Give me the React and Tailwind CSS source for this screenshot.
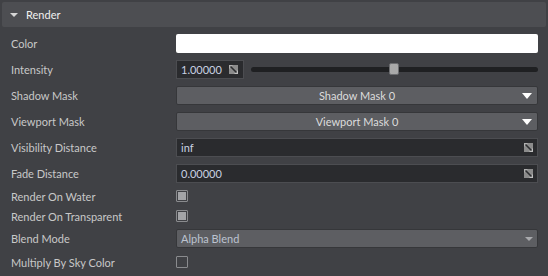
import React from "react";

const font = { fontFamily: 'Lato, "Liberation Sans", Arial, sans-serif' };

function ResizeIcon() {
  return (
    <svg width="9" height="9" viewBox="0 0 9 9" className="shrink-0">
      <rect x="0" y="0" width="9" height="9" fill="#8c8c8c" />
      <polygon points="0,0 4,0 0,4" fill="#b0b0b0" />
      <polygon points="9,9 5,9 9,5" fill="#c0c0c0" />
      <line x1="1.5" y1="1.5" x2="7.5" y2="7.5" stroke="#2c2d30" strokeWidth="1.6" />
    </svg>
  );
}

function Arrow({ dim }) {
  return dim ? (
    <svg width="8" height="4" viewBox="0 0 8 4" className="shrink-0">
      <polygon points="0,0 8,0 4,4" fill="#a9aaad" />
    </svg>
  ) : (
    <svg width="10" height="6" viewBox="0 0 10 6" className="shrink-0">
      <polygon points="0,0 10,0 5,6" fill="#ffffff" />
    </svg>
  );
}

function Row({ label, h, children }) {
  return (
    <div className={`flex items-center ${h}`}>
      <div className="w-[174px] pl-[9px] text-[11px] text-[#c8c8c8] leading-none">{label}</div>
      <div className="w-[362px] flex items-center">{children}</div>
    </div>
  );
}

function TextField({ value }) {
  return (
    <div className="w-full h-[19px] bg-[#2a2b2e] border border-[#4c4d51] flex items-center pl-[4px] pr-[4px]">
      <span className="flex-1 text-[11px] text-[#c9d2e2] leading-none">{value}</span>
      <ResizeIcon />
    </div>
  );
}

function Dropdown({ value }) {
  return (
    <div className="w-full h-[19px] bg-[#5d5e62] border border-[#36373a] rounded-[2px] flex items-center relative">
      <span className="flex-1 text-center text-[11px] text-[#dcdcdc] leading-none">{value}</span>
      <div className="absolute right-[5px] top-[6px]">
        <Arrow />
      </div>
    </div>
  );
}

function Checkbox({ checked }) {
  return (
    <div className="w-[12px] h-[12px] border border-[#8a8b8e] rounded-[1px] flex items-center justify-center">
      {checked && <div className="w-[8px] h-[8px] bg-[#a3a4a7]" />}
    </div>
  );
}

export default function App() {
  return (
    <div className="w-[548px] h-[276px] bg-[#404145] pt-[2px] px-[2px] overflow-hidden" style={font}>
      <div className="h-[25px] rounded-[2px] bg-[#4d4e52] flex items-center pl-[8px]">
        <svg width="8" height="4" viewBox="0 0 8 4" className="mt-[1px]">
          <polygon points="0,0 8,0 4,4" fill="#d6d6d6" />
        </svg>
        <span className="ml-[8px] text-[11px] text-[#f0f0f0] leading-none">Render</span>
      </div>
      <div className="mt-[3px]">
        <Row label="Color" h="h-[26px]">
          <div className="w-full h-[19px] bg-white rounded-[2px]" />
        </Row>
        <Row label="Intensity" h="h-[26px]">
          <div className="w-[68px] h-[19px] bg-[#2a2b2e] border border-[#4c4d51] flex items-center pl-[4px] pr-[5px]">
            <span className="flex-1 text-[11px] text-[#c9d2e2] leading-none">1.00000</span>
            <ResizeIcon />
          </div>
          <div className="ml-[7px] flex-1 relative h-[13px] flex items-center">
            <div className="w-full h-[5px] rounded-full bg-[#1f2022]" />
            <div className="absolute left-[138px] top-0 w-[10px] h-[12px] rounded-[2px] bg-[#a9a9a9] border border-[#6c6d70]" />
          </div>
        </Row>
        <Row label="Shadow Mask" h="h-[26px]">
          <Dropdown value="Shadow Mask 0" />
        </Row>
        <Row label="Viewport Mask" h="h-[26px]">
          <Dropdown value="Viewport Mask 0" />
        </Row>
        <Row label="Visibility Distance" h="h-[26px]">
          <TextField value="inf" />
        </Row>
        <Row label="Fade Distance" h="h-[26px]">
          <TextField value="0.00000" />
        </Row>
        <Row label="Render On Water" h="h-[20px]">
          <Checkbox checked />
        </Row>
        <Row label="Render On Transparent" h="h-[20px]">
          <Checkbox checked />
        </Row>
        <Row label="Blend Mode" h="h-[25px]">
          <div className="w-full h-[19px] bg-[#5d5e62] border border-[#36373a] rounded-[2px] flex items-center pl-[4px] relative">
            <span className="flex-1 text-[11px] text-[#bcc3d0] leading-none">Alpha Blend</span>
            <div className="absolute right-[4px] top-[7px]">
              <Arrow dim />
            </div>
          </div>
        </Row>
        <Row label="Multiply By Sky Color" h="h-[22px]">
          <Checkbox />
        </Row>
      </div>
    </div>
  );
}
